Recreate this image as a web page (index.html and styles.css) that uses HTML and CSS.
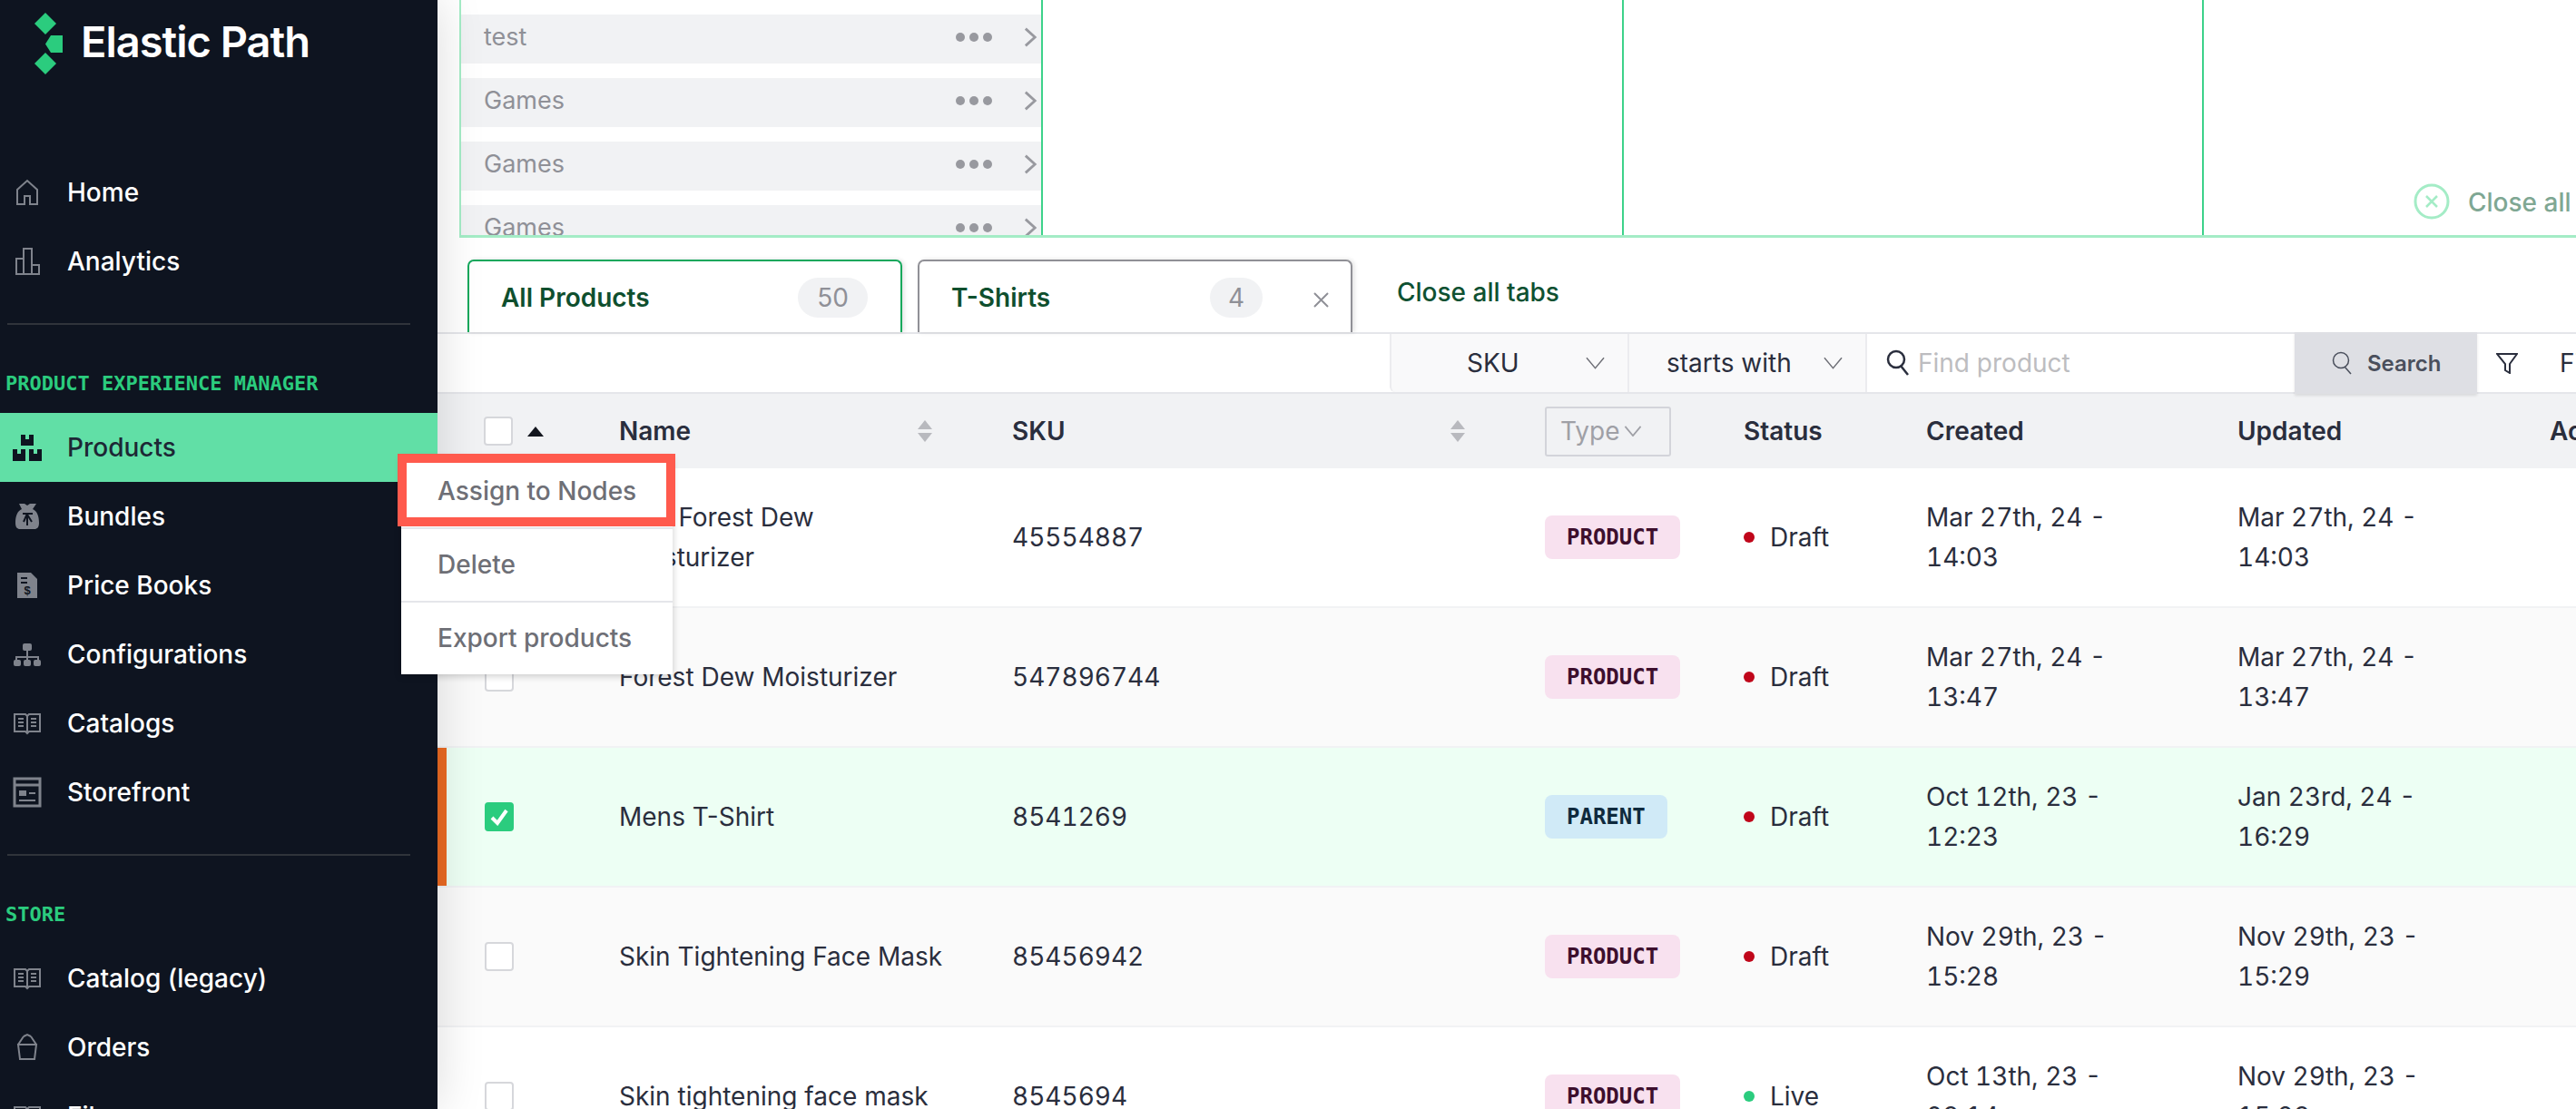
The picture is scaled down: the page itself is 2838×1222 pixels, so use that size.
FILE: index.html
```html
<!DOCTYPE html>
<html lang="en">
<head>
    <meta charset="UTF-8">
    <meta name="viewport" content="width=device-width, initial-scale=1.0">
    <title>Products</title>
    <link rel="stylesheet" href="styles.css">
</head>
<body>
    <div class="app">
        <aside class="sidebar">
            <div class="logo">
                <svg class="logo-mark" width="32" height="70" viewBox="0 0 32 70">
                    <path d="M13 2l12 12-12 12L1 14z" fill="#2bcc7e"/>
                    <path d="M13 46l12 12-12 12L1 58z" fill="#2bcc7e"/>
                    <path d="M19 27h13v19H19l-6-9.500z" fill="#2bcc7e"/>
                </svg>
                <span class="logo-text">Elastic Path</span>
            </div>

            <a class="nav-item">
                <svg class="nav-icon" viewBox="0 0 32 32"><path d="M5 29V13L16 3l11 10v16h-8v-9h-6v9z" fill="none" stroke="currentColor" stroke-width="2"/></svg>
                Home
            </a>
            <a class="nav-item">
                <svg class="nav-icon" viewBox="0 0 32 32"><path d="M4 30V13h8v17zM12 30V2h9v28zM21 30V20h8v10z" fill="none" stroke="currentColor" stroke-width="2"/></svg>
                Analytics
            </a>

            <hr class="nav-divider">
            <div class="nav-label">PRODUCT EXPERIENCE MANAGER</div>

            <a class="nav-item active">
                <svg class="nav-icon" viewBox="0 0 32 32"><path d="M9 2h5v5h4V2h5v12H9zM0 18h5v5h4v-5h5v13H0zM18 18h5v5h4v-5h5v13H18z" fill="currentColor"/></svg>
                Products
            </a>
            <a class="nav-item">
                <svg class="nav-icon" viewBox="0 0 32 32"><path d="M7 2h6l3 2 3-2h7l-4 6c5 2 7 8 7 15 0 5-2 7-5 7H8c-3 0-5-2-5-7 0-7 2-13 7-15z" fill="currentColor"/><path d="M11 13h11M16 13l-4 9M16 14l5 8M16 14v12" stroke="#0e1420" stroke-width="2" fill="none"/></svg>
                Bundles
            </a>
            <a class="nav-item">
                <svg class="nav-icon" viewBox="0 0 32 32"><path d="M5 2h15l7 7v21H5z" fill="currentColor"/><path d="M9 8h7M9 13h7" stroke="#0e1420" stroke-width="2"/><text x="16" y="26" class="dollar">$</text></svg>
                Price Books
            </a>
            <a class="nav-item">
                <svg class="nav-icon" viewBox="0 0 32 32"><path d="M16 12v7M4 24v-5h24v5M16 19v5" fill="none" stroke="currentColor" stroke-width="2"/><rect x="11" y="4" width="10" height="8" rx="2" fill="currentColor"/><rect x="1" y="22" width="8" height="7" rx="2" fill="currentColor"/><rect x="12" y="22" width="8" height="7" rx="2" fill="currentColor"/><rect x="23" y="22" width="8" height="7" rx="2" fill="currentColor"/></svg>
                Configurations
            </a>
            <a class="nav-item">
                <svg class="nav-icon" viewBox="0 0 32 32"><path d="M2 6h12l2 2 2-2h12v19H18l-2 2-2-2H2zM16 8v19M6 11h6M6 15h6M6 19h6M20 11h6M20 15h6M20 19h6" fill="none" stroke="currentColor" stroke-width="2"/></svg>
                Catalogs
            </a>
            <a class="nav-item">
                <svg class="nav-icon nav-icon-lg" viewBox="0 0 32 34"><path d="M2 2h28v30H2zM2 9h28" fill="none" stroke="currentColor" stroke-width="3"/><path d="M7 15h8v6H7zM18 17h7v2h-7zM7 25h18v2H7z" fill="currentColor"/></svg>
                Storefront
            </a>

            <hr class="nav-divider nav-divider-2">
            <div class="nav-label">STORE</div>

            <a class="nav-item">
                <svg class="nav-icon" viewBox="0 0 32 32"><path d="M2 6h12l2 2 2-2h12v19H18l-2 2-2-2H2zM16 8v19M6 11h6M6 15h6M6 19h6M20 11h6M20 15h6M20 19h6" fill="none" stroke="currentColor" stroke-width="2"/></svg>
                Catalog (legacy)
            </a>
            <a class="nav-item">
                <svg class="nav-icon" viewBox="0 0 32 32"><path d="M6 13h20l-2 16H8zM6 13l6-9M26 13l-6-9M12 4l4-2 4 2" fill="none" stroke="currentColor" stroke-width="2"/></svg>
                Orders
            </a>
            <a class="nav-item">
                <svg class="nav-icon" viewBox="0 0 32 32"><path d="M2 6h12l2 2 2-2h12v19H18l-2 2-2-2H2zM16 8v19" fill="none" stroke="currentColor" stroke-width="2"/></svg>
                Files
            </a>
        </aside>

        <main class="main">
            <section class="columns">
                <div class="column">
                    <div class="node"><span>test</span><span class="node-dots"><i></i><i></i><i></i></span><svg class="node-arrow" viewBox="0 0 16 22"><path d="M2 1l11 10L2 21" fill="none" stroke="currentColor" stroke-width="3"/></svg></div>
                    <div class="node"><span>Games</span><span class="node-dots"><i></i><i></i><i></i></span><svg class="node-arrow" viewBox="0 0 16 22"><path d="M2 1l11 10L2 21" fill="none" stroke="currentColor" stroke-width="3"/></svg></div>
                    <div class="node"><span>Games</span><span class="node-dots"><i></i><i></i><i></i></span><svg class="node-arrow" viewBox="0 0 16 22"><path d="M2 1l11 10L2 21" fill="none" stroke="currentColor" stroke-width="3"/></svg></div>
                    <div class="node"><span>Games</span><span class="node-dots"><i></i><i></i><i></i></span><svg class="node-arrow" viewBox="0 0 16 22"><path d="M2 1l11 10L2 21" fill="none" stroke="currentColor" stroke-width="3"/></svg></div>
                </div>
                <div class="column"></div>
                <div class="column"></div>
                <div class="close-columns">
                    <svg width="40" height="40" viewBox="0 0 40 40"><circle cx="20" cy="20" r="18" fill="none" stroke="#a4ecc6" stroke-width="3"/><path d="M14 14l12 12M26 14L14 26" stroke="#a4ecc6" stroke-width="2.500"/></svg>
                    <span>Close all</span>
                </div>
            </section>

            <div class="tabs">
                <div class="tab tab-active">
                    <span>All Products</span>
                    <span class="tab-count tab-count-wide">50</span>
                </div>
                <div class="tab">
                    <span>T-Shirts</span>
                    <span class="tab-count">4</span>
                    <svg class="tab-close" width="20" height="20" viewBox="0 0 20 20"><path d="M2 3l15 15M17 3L2 18" stroke="#8f9097" stroke-width="2"/></svg>
                </div>
                <a class="close-tabs">Close all tabs</a>
            </div>

            <div class="toolbar">
                <div class="select select-first">
                    <span>SKU</span>
                    <svg class="chevron" viewBox="0 0 22 14"><path d="M1 1l10 12L21 1" fill="none" stroke="currentColor" stroke-width="1.500"/></svg>
                </div>
                <div class="select select-second">
                    <span>starts with</span>
                    <svg class="chevron" viewBox="0 0 22 14"><path d="M1 1l10 12L21 1" fill="none" stroke="currentColor" stroke-width="1.500"/></svg>
                </div>
                <div class="find">
                    <svg width="26" height="30" viewBox="0 0 26 30"><circle cx="11" cy="11" r="9" fill="none" stroke="#2a2e3d" stroke-width="2.500"/><path d="M16 18l8 10" stroke="#2a2e3d" stroke-width="2.500"/></svg>
                    <span>Find product</span>
                </div>
                <button class="search-btn">
                    <svg width="22" height="26" viewBox="0 0 22 26"><circle cx="10" cy="10" r="8.500" fill="none" stroke="#4a4f5c" stroke-width="1.500"/><path d="M14 17l7 8" stroke="#4a4f5c" stroke-width="1.500"/></svg>
                    Search
                </button>
                <div class="filter">
                    <svg width="24" height="24" viewBox="0 0 24 24"><path d="M1 2h22l-8 11v10l-5-3V13z" fill="none" stroke="#2a2e3d" stroke-width="2"/></svg>
                    <span>Filters</span>
                </div>
            </div>

            <div class="table">
                <div class="row head">
                    <div class="cell-check">
                        <span class="check"></span>
                        <span class="sort-up"></span>
                    </div>
                    <div class="sortable sort-name">Name<span class="sort"><i></i><i></i></span></div>
                    <div class="sortable sort-sku">SKU<span class="sort"><i></i><i></i></span></div>
                    <div><span class="type-filter">Type<svg width="20" height="12" viewBox="0 0 22 14"><path d="M1 1l10 12L21 1" fill="none" stroke="currentColor" stroke-width="2"/></svg></span></div>
                    <div>Status</div>
                    <div>Created</div>
                    <div>Updated</div>
                    <div>Actions</div>
                </div>

                <div class="row">
                    <div class="cell-check"><span class="check"></span></div>
                    <div class="name">Pine Forest Dew Moisturizer</div>
                    <div class="num">45554887</div>
                    <div><span class="badge badge-product">PRODUCT</span></div>
                    <div class="status"><i class="dot dot-draft"></i>Draft</div>
                    <div class="date num">Mar 27th, 24 -<br>14:03</div>
                    <div class="date num">Mar 27th, 24 -<br>14:03</div>
                    <div></div>
                </div>
                <div class="row row-alt">
                    <div class="cell-check"><span class="check"></span></div>
                    <div class="name">Forest Dew Moisturizer</div>
                    <div class="num">547896744</div>
                    <div><span class="badge badge-product">PRODUCT</span></div>
                    <div class="status"><i class="dot dot-draft"></i>Draft</div>
                    <div class="date num">Mar 27th, 24 -<br>13:47</div>
                    <div class="date num">Mar 27th, 24 -<br>13:47</div>
                    <div></div>
                </div>
                <div class="row row-selected">
                    <div class="cell-check">
                        <span class="check checked">
                            <svg width="22" height="20" viewBox="0 0 22 20"><path d="M3 11l6 6L19 3" fill="none" stroke="#fff" stroke-width="4"/></svg>
                        </span>
                    </div>
                    <div class="name">Mens T-Shirt</div>
                    <div class="num">8541269</div>
                    <div><span class="badge badge-parent">PARENT</span></div>
                    <div class="status"><i class="dot dot-draft"></i>Draft</div>
                    <div class="date num">Oct 12th, 23 -<br>12:23</div>
                    <div class="date num">Jan 23rd, 24 -<br>16:29</div>
                    <div></div>
                </div>
                <div class="row row-alt">
                    <div class="cell-check"><span class="check"></span></div>
                    <div class="name">Skin Tightening Face Mask</div>
                    <div class="num">85456942</div>
                    <div><span class="badge badge-product">PRODUCT</span></div>
                    <div class="status"><i class="dot dot-draft"></i>Draft</div>
                    <div class="date num">Nov 29th, 23 -<br>15:28</div>
                    <div class="date num">Nov 29th, 23 -<br>15:29</div>
                    <div></div>
                </div>
                <div class="row">
                    <div class="cell-check"><span class="check"></span></div>
                    <div class="name">Skin tightening face mask</div>
                    <div class="num">8545694</div>
                    <div><span class="badge badge-product">PRODUCT</span></div>
                    <div class="status"><i class="dot dot-live"></i>Live</div>
                    <div class="date num">Oct 13th, 23 -<br>09:14</div>
                    <div class="date num">Nov 29th, 23 -<br>15:29</div>
                    <div></div>
                </div>
            </div>
        </main>

        <div class="menu">
            <div class="menu-item menu-item-marked">Assign to Nodes</div>
            <div class="menu-item">Delete</div>
            <div class="menu-item">Export products</div>
        </div>
    </div>
</body>
</html>
```
FILE: styles.css
```css
* {
    box-sizing: border-box;
}

body {
    margin: 0;
    font-family: Inter, "Liberation Sans", sans-serif;
    font-size: 28px;
    color: #2a2e3d;
    background-color: white;
}

.app {
    position: relative;
    display: flex;
    width: 2838px;
    height: 1222px;
    overflow: hidden;
}

/* sidebar */
.sidebar {
    position: relative;
    z-index: 2;
    flex: 0 0 482px;
    height: 1222px;
    overflow: hidden;
    background-color: #0e1420;
    box-shadow: 0 0 50px rgba(0, 0, 0, 0.14);
}

.logo {
    display: flex;
    align-items: flex-start;
    height: 174px;
    padding: 12px 0 0 37px;
}

.logo-text {
    margin: 6px 0 0 20px;
    color: white;
    font-size: 47px;
    line-height: 56px;
    font-weight: 600;
    letter-spacing: -1px;
}

.nav-item {
    display: flex;
    align-items: center;
    height: 76px;
    color: white;
    font-weight: 500;
}

.nav-item.active {
    background-color: #61dfa6;
    color: #1d2735;
}

.nav-item.active .nav-icon {
    color: #0e1420;
}

.nav-icon {
    width: 32px;
    height: 32px;
    margin: 0 28px 0 14px;
    color: #7f838c;
}

.nav-icon-lg {
    height: 34px;
}

.dollar {
    font-family: "Liberation Sans", sans-serif;
    font-size: 13px;
    font-weight: 700;
    fill: #0e1420;
    text-anchor: middle;
}

.nav-divider {
    height: 2px;
    margin: 30px 30px 0 8px;
    border: none;
    background-color: #30343b;
}

.nav-divider-2 {
    margin-top: 30px;
}

.nav-label {
    height: 30px;
    margin: 50px 0 17px 6px;
    color: #2bcc7e;
    font-family: "DejaVu Sans Mono", monospace;
    font-size: 22px;
    line-height: 30px;
    font-weight: 700;
}

/* main area */
.main {
    flex: 1;
    min-width: 0;
}

.columns {
    display: grid;
    grid-template-columns: 641px 640px 639px 1fr;
    height: 262px;
    margin-left: 24px;
    border-left: 2px solid #a4ecc6;
    border-bottom: 3px solid #a4ecc6;
    overflow: hidden;
}

.column {
    display: flex;
    flex-direction: column;
    gap: 16px;
    padding-top: 16px;
    border-right: 2px solid #3dd28a;
}

.column:first-child {
    margin-left: -2px;
    padding-left: 2px;
}

.node {
    flex: 0 0 54px;
    display: flex;
    align-items: center;
    padding: 0 4px 5px 25px;
    background-color: #f1f2f4;
    color: #8f9097;
    font-size: 27px;
}

.node-dots {
    display: flex;
    gap: 5px;
    margin-left: auto;
}

.node-dots i {
    width: 10px;
    height: 10px;
    border-radius: 50%;
    background-color: #98999f;
}

.node-arrow {
    width: 15px;
    height: 22px;
    margin-left: 35px;
    color: #98999f;
}

.close-columns {
    display: flex;
    align-items: flex-end;
    gap: 20px;
    padding: 0 0 38px 231px;
    white-space: nowrap;
    color: #7fa793;
    font-weight: 500;
    line-height: 38px;
}

.tabs {
    display: flex;
    align-items: flex-end;
    gap: 17px;
    height: 104px;
    padding-left: 33px;
}

.tab {
    display: flex;
    align-items: center;
    width: 479px;
    height: 80px;
    padding: 2px 22px 0 35px;
    border: 2px solid #909096;
    border-bottom: none;
    border-radius: 7px 7px 0 0;
    box-shadow: 2px 0 5px rgba(0, 0, 0, 0.12);
    color: #0f4f2e;
    font-weight: 600;
    background-color: white;
}

.tab-active {
    border-color: #12a85c;
}

.tab-count {
    display: flex;
    align-items: center;
    justify-content: center;
    width: 58px;
    height: 44px;
    margin-left: auto;
    border-radius: 22px;
    background-color: #f1f2f4;
    color: #8f9097;
    font-weight: 400;
}

.tab-count-wide {
    width: 77px;
    margin-right: 14px;
}

.tab-close {
    margin: 4px 0 0 55px;
}

.close-tabs {
    margin: 0 0 27px 32px;
    color: #0f5132;
    font-weight: 500;
}

.toolbar {
    display: flex;
    align-items: stretch;
    height: 68px;
    padding-left: 1049px;
    border-top: 2px solid #e5e6ea;
    border-bottom: 2px solid #e5e6ea;
}

.select {
    flex: 0 0 262px;
    display: flex;
    align-items: center;
    border-left: 2px solid #ececef;
    background-color: #f9f9fa;
    white-space: nowrap;
}

.select-first {
    padding-left: 83px;
    border-radius: 0 0 0 6px;
}

.select-second {
    padding-left: 41px;
}

.chevron {
    width: 21px;
    height: 14px;
    margin-left: auto;
    margin-right: 25px;
    color: #6e6f76;
}

.find {
    flex: 0 0 473px;
    display: flex;
    align-items: center;
    gap: 9px;
    padding-left: 21px;
    border-left: 2px solid #ececef;
    color: #bdbdc0;
}

.search-btn {
    flex: 0 0 201px;
    display: flex;
    align-items: center;
    gap: 17px;
    margin: -2px 0;
    padding: 0 0 0 41px;
    border: none;
    background-color: #dedfe4;
    box-shadow: 0 2px 3px rgba(0, 0, 0, 0.1);
    color: #4a4f5c;
    font-family: inherit;
    font-size: 24px;
    font-weight: 600;
}

.filter {
    display: flex;
    align-items: center;
    gap: 46px;
    padding-left: 21px;
    white-space: nowrap;
}

/* table */
.row {
    display: grid;
    grid-template-columns: 200px 433px 587px 219px 201px 343px 344px 1fr;
    align-items: center;
    height: 154px;
    border-bottom: 2px solid #f1f2f4;
    white-space: nowrap;
}

.row.head {
    height: 82px;
    border-bottom: none;
    background-color: #f1f2f4;
    font-weight: 600;
}

.row.head .cell-check {
    padding-left: 51px;
}

.row-alt {
    background-color: #fafafa;
}

.row-selected {
    background-color: #edfff4;
    box-shadow: inset 10px 0 0 #ea6a22;
}

.cell-check {
    display: flex;
    align-items: center;
    padding-left: 52px;
}

.check {
    display: flex;
    align-items: center;
    justify-content: center;
    width: 32px;
    height: 32px;
    border: 2px solid #d6d7db;
    border-radius: 4px;
    background-color: white;
}

.check.checked {
    border-color: #2bcc7e;
    background-color: #2bcc7e;
}

.sort-up {
    width: 0;
    height: 0;
    margin-left: 16px;
    border-left: 9px solid transparent;
    border-right: 9px solid transparent;
    border-bottom: 11px solid #14171f;
}

.sortable {
    display: flex;
    align-items: center;
    justify-content: space-between;
}

.sort-name {
    width: 345px;
}

.sort-sku {
    width: 499px;
}

.sort {
    display: flex;
    flex-direction: column;
    gap: 4px;
}

.sort i {
    width: 0;
    height: 0;
    border-left: 8px solid transparent;
    border-right: 8px solid transparent;
    border-bottom: 10px solid #b8b9be;
}

.sort i:last-child {
    border-bottom: none;
    border-top: 10px solid #b8b9be;
}

.type-filter {
    display: inline-flex;
    align-items: center;
    gap: 4px;
    width: 139px;
    height: 55px;
    padding-left: 15px;
    border: 2px solid #d3d4da;
    border-radius: 3px;
    color: #9fa0a6;
    font-weight: 400;
}

.name {
    max-width: 360px;
    white-space: normal;
    line-height: 44px;
}

.num {
    font-variant-numeric: tabular-nums;
}

.date {
    line-height: 44px;
}

.badge {
    display: inline-block;
    height: 48px;
    padding: 0 24px;
    border-radius: 8px;
    font-family: "DejaVu Sans Mono", monospace;
    font-size: 24px;
    line-height: 48px;
    font-weight: 700;
}

.badge-product {
    background-color: #f8e1ef;
    color: #3d0f2d;
}

.badge-parent {
    background-color: #d0eaf7;
    color: #0f2a3d;
}

.status {
    display: flex;
    align-items: center;
    gap: 17px;
}

.dot {
    width: 12px;
    height: 12px;
    border-radius: 50%;
}

.dot-draft {
    background-color: #c0061a;
}

.dot-live {
    background-color: #2bcc7e;
}

/* actions menu, open over the sidebar and table */
.menu {
    position: absolute;
    z-index: 3;
    left: 442px;
    top: 503px;
    width: 299px;
    background-color: white;
    box-shadow: 0 2px 8px rgba(0, 0, 0, 0.2);
    color: #6e6f76;
    font-weight: 500;
}

.menu-item {
    display: flex;
    align-items: center;
    height: 81px;
    padding: 0 0 2px 40px;
    border-top: 2px solid #e5e6ea;
}

.menu-item:first-child {
    height: 78px;
    border-top: none;
}

.menu-item-marked {
    position: relative;
}

.menu-item-marked::after {
    content: "";
    position: absolute;
    left: -4px;
    top: -3px;
    box-sizing: border-box;
    width: 306px;
    height: 80px;
    border: 10px solid #ff5a4d;
}
```
